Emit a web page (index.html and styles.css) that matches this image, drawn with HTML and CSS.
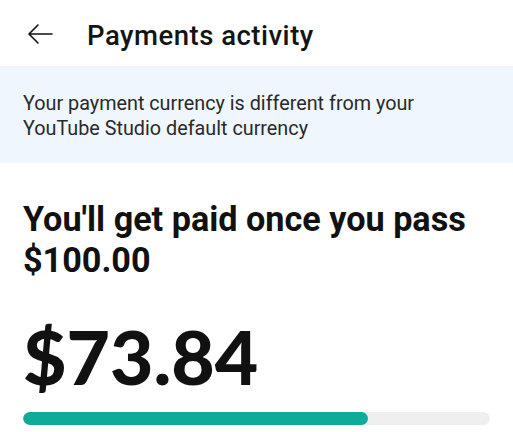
FILE: index.html
```html
<!DOCTYPE html>
<html>
<head>
<meta charset="utf-8">
<link rel="stylesheet" href="styles.css">
</head>
<body>
<div class="page">
  <header class="topbar">
    <svg class="back" width="26" height="20" viewBox="0 0 26 20">
      <path d="M25 10H2M11 1L2 10L11 19" fill="none" stroke="#111" stroke-width="1.6" stroke-linecap="round" stroke-linejoin="round"/>
    </svg>
    <h1 class="title">Payments activity</h1>
  </header>
  <div class="banner">
    <p>Your payment currency is different from your YouTube Studio default currency</p>
  </div>
  <section class="summary">
    <h2 class="heading">You'll get paid once you pass $100.00</h2>
    <div class="amount">$73.84</div>
    <div class="track"><div class="fill" style="width: 73.84%"></div></div>
  </section>
</div>
</body>
</html>
```
FILE: styles.css
```css
* { box-sizing: border-box; }
html, body { margin: 0; padding: 0; background: #fff; }
body { font-family: Roboto, "Noto Sans", sans-serif; color: #111; }
.page { width: 513px; height: 432px; overflow: hidden; }
.topbar {
  height: 66px;
  display: flex;
  align-items: center;
  padding-left: 27px;
}
.back { flex: none; margin-right: 34px; margin-top: 2px; }
.title {
  margin: 0;
  margin-top: 4px;
  font-size: 27.5px;
  font-weight: 500;
  letter-spacing: 0.5px;
  color: #141414;
}
.banner {
  background: #eff6fd;
  height: 97px;
  padding: 25px 24px 0 23px;
}
.banner p {
  margin: 0;
  max-width: 420px;
  font-size: 19.8px;
  line-height: 25px;
  color: #2a2a2a;
}
.summary { padding: 36px 23px 0 23px; }
.heading {
  margin: 0;
  font-size: 34.2px;
  font-weight: 700;
  line-height: 41px;
  color: #111;
}
.amount {
  margin-top: 35px;
  font-family: Lato, sans-serif;
  font-weight: 900;
  font-size: 75px;
  line-height: 80px;
  letter-spacing: 0;
  color: #111;
}
.track {
  margin-top: 16px;
  width: 467px;
  height: 13px;
  border-radius: 7px;
  background: #efefef;
  overflow: hidden;
}
.fill {
  height: 100%;
  background: #0eab98;
  border-radius: 7px;
}
```
